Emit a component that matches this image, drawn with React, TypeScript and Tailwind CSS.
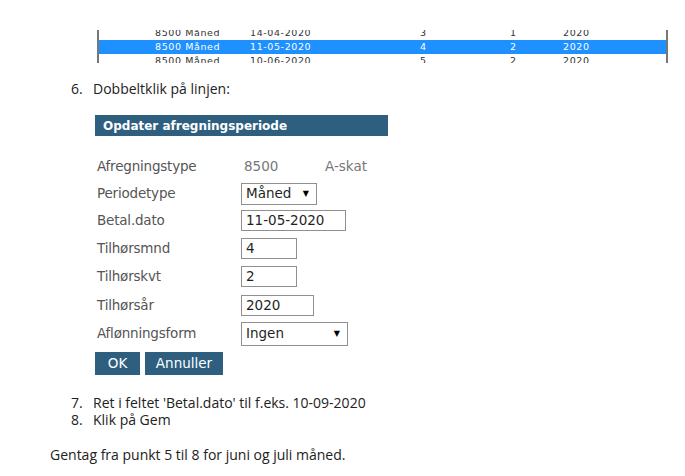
import React from 'react';

const body = { fontFamily: '"Open Sans", "DejaVu Sans", sans-serif' };
const form = { fontFamily: '"DejaVu Sans", Verdana, sans-serif' };
const grid = { fontFamily: '"DejaVu Sans", Verdana, sans-serif' };

const tableRows = [
  { type: '8500 Måned', date: '14-04-2020', mnd: '3', kvt: '1', aar: '2020', on: false },
  { type: '8500 Måned', date: '11-05-2020', mnd: '4', kvt: '2', aar: '2020', on: true },
  { type: '8500 Måned', date: '10-06-2020', mnd: '5', kvt: '2', aar: '2020', on: false },
];

const Box = ({ w, h = 'h-[21px]', children, arrow }: { w: string; h?: string; children: React.ReactNode; arrow?: boolean }) => (
  <div className={`${w} ${h} flex items-center justify-between border border-[#8f8f8f] bg-white pl-[4px] pr-[7px] text-[13.5px] text-[#1f1f1f]`}>
    <span>{children}</span>
    {arrow && <span className="text-[8px] text-black">▼</span>}
  </div>
);

const Row = ({ label, h, children }: { label: string; h: string; children: React.ReactNode }) => (
  <div className={`flex items-center ${h}`}>
    <span className="w-[144px] text-[13.5px] tracking-[-0.2px] text-[#555]">{label}</span>
    {children}
  </div>
);

export default function App() {
  return (
    <div className="w-[685px] h-[476px] overflow-hidden bg-white text-[#222]">
      {/* cut-off list from previous step */}
      <div className="ml-[97px] mt-[30px] h-[33px] w-[571px] overflow-hidden border-x-2 border-[#777]">
        <div className="-mt-[4px]" style={grid}>
          {tableRows.map((r, i) => (
            <div
              key={i}
              className={`flex h-[14px] items-center pl-[56px] text-[9.5px] tracking-[0.6px] leading-none ${r.on ? 'bg-[#1e90ff] text-white' : 'text-[#333]'}`}
            >
              <span className="w-[95px]">{r.type}</span>
              <span className="w-[170px]">{r.date}</span>
              <span className="w-[90px]">{r.mnd}</span>
              <span className="w-[53px]">{r.kvt}</span>
              <span>{r.aar}</span>
            </div>
          ))}
        </div>
      </div>

      <div className="mt-[15px] flex h-[20px] items-center text-[14px] text-[#222]" style={body}>
        <span className="ml-[71px] w-[22px]">6.</span>
        <span>Dobbeltklik på linjen:</span>
      </div>

      <div className="ml-[95px] mt-[17px] w-[293px]" style={form}>
        <div className="flex h-[21px] items-center bg-[#2e5f7f] pl-[8px] text-[12px] font-bold text-white">
          Opdater afregningsperiode
        </div>
        <div className="mt-[16px] pl-[2px]">
          <Row label="Afregningstype" h="h-[28px]">
            <span className="ml-[3px] w-[81px] text-[13.5px] text-[#777]">8500</span>
            <span className="text-[13.5px] text-[#777]">A-skat</span>
          </Row>
          <Row label="Periodetype" h="h-[27px]">
            <Box w="w-[76px]" h="h-[22px]" arrow>Måned</Box>
          </Row>
          <Row label="Betal.dato" h="h-[27px]">
            <Box w="w-[105px]">11-05-2020</Box>
          </Row>
          <Row label="Tilhørsmnd" h="h-[28px]">
            <Box w="w-[56px]">4</Box>
          </Row>
          <Row label="Tilhørskvt" h="h-[28px]">
            <Box w="w-[56px]">2</Box>
          </Row>
          <Row label="Tilhørsår" h="h-[30px]">
            <Box w="w-[73px]">2020</Box>
          </Row>
          <Row label="Aflønningsform" h="h-[27px]">
            <Box w="w-[107px]" h="h-[24px]" arrow>Ingen</Box>
          </Row>
        </div>
        <div className="mt-[5px] flex gap-[5px]">
          <button className="h-[23px] w-[45px] bg-[#2e5f7f] text-[13.5px] text-white">OK</button>
          <button className="h-[23px] w-[78px] bg-[#2e5f7f] text-[13.5px] text-white">Annuller</button>
        </div>
      </div>

      <div className="mt-[19px] text-[14px] text-[#222]" style={body}>
        <div className="flex h-[17px] items-center">
          <span className="ml-[71px] w-[22px]">7.</span>
          <span>Ret i feltet 'Betal.dato' til f.eks. 10-09-2020</span>
        </div>
        <div className="flex h-[17px] items-center">
          <span className="ml-[71px] w-[22px]">8.</span>
          <span>Klik på Gem</span>
        </div>
      </div>

      <div className="mt-[17px] flex h-[18px] items-center pl-[50px] text-[14px] text-[#222]" style={body}>
        Gentag fra punkt 5 til 8 for juni og juli måned.
      </div>
    </div>
  );
}
